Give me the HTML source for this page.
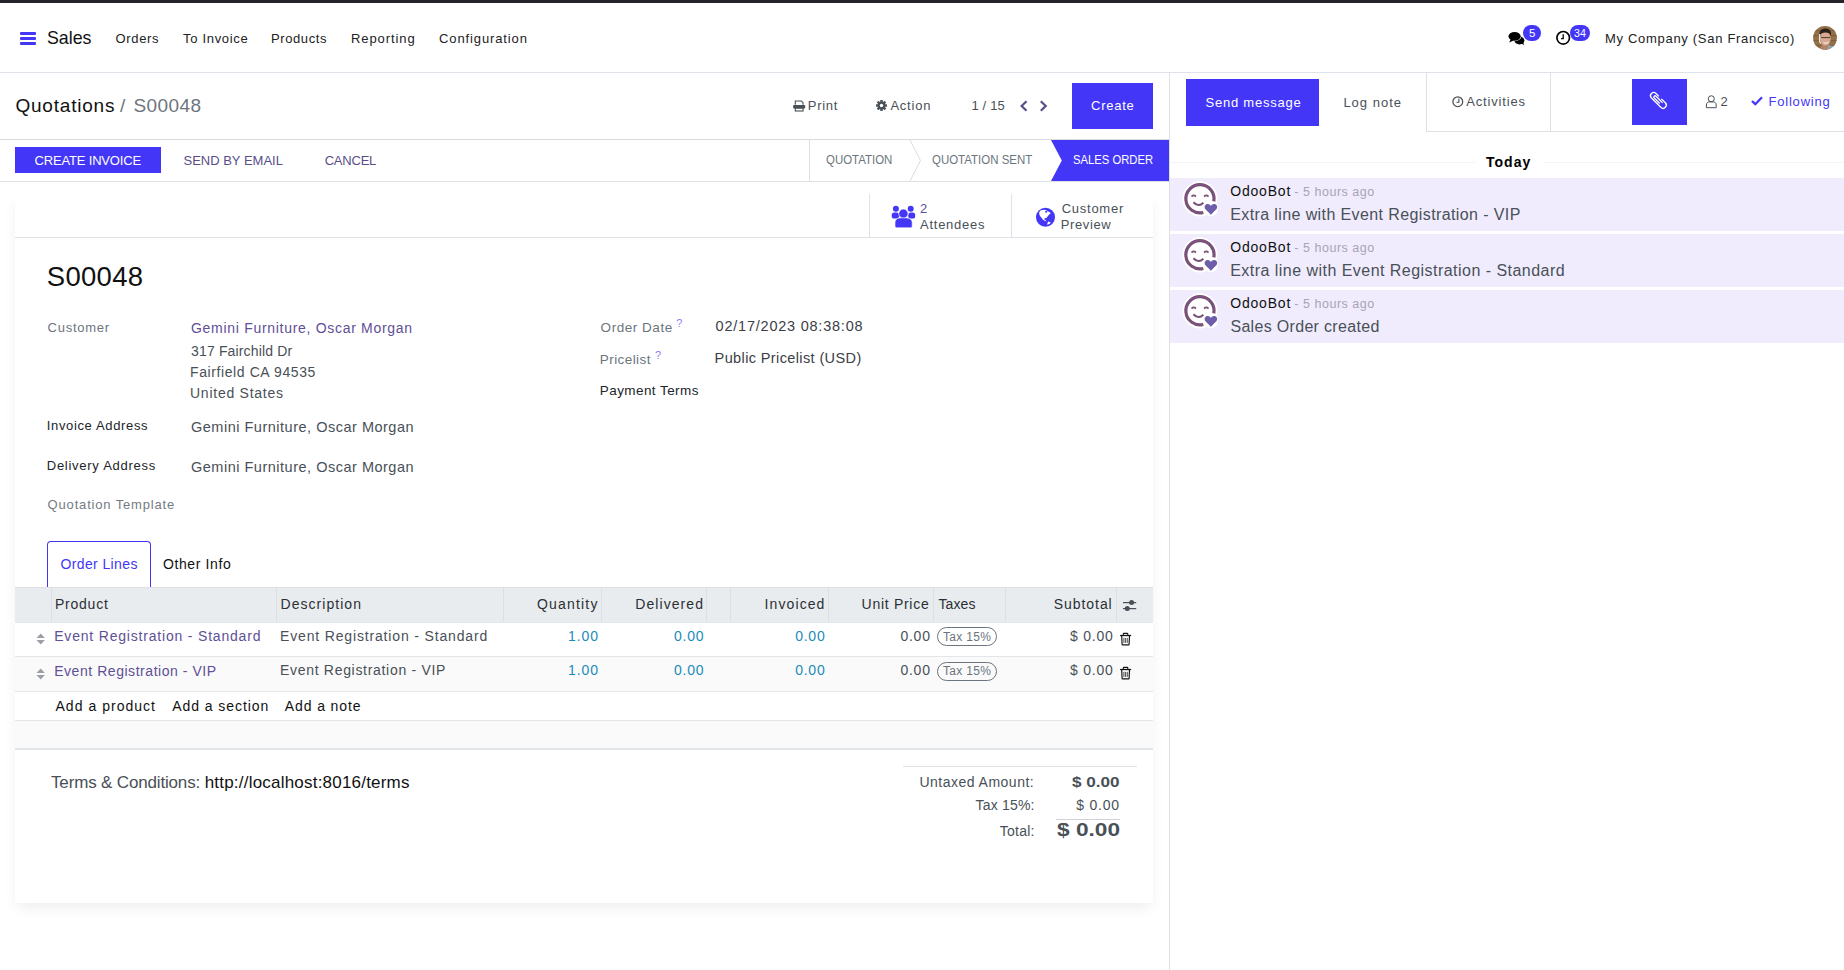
<!DOCTYPE html>
<html><head><meta charset="utf-8">
<style>
html,body{margin:0;padding:0;width:1844px;height:970px;overflow:hidden;background:#fff;font-family:"Liberation Sans",sans-serif;}
.a{position:absolute;box-sizing:border-box;}
.t{position:absolute;white-space:pre;font-family:"Liberation Sans",sans-serif;}
svg{position:absolute;overflow:visible;}
</style></head><body>
<!-- top strip -->
<div class="a" style="left:0;top:0;width:1844px;height:3px;background:#25232b"></div>
<!-- navbar border -->
<div class="a" style="left:0;top:72px;width:1844px;height:1px;background:#dde3e8"></div>
<!-- hamburger -->
<div class="a" style="left:20px;top:32px;width:16px;height:2.6px;background:#4336f7;border-radius:1px"></div>
<div class="a" style="left:20px;top:37.2px;width:16px;height:2.6px;background:#4336f7;border-radius:1px"></div>
<div class="a" style="left:20px;top:42.4px;width:16px;height:2.6px;background:#4336f7;border-radius:1px"></div>
<!-- chat icon -->
<svg style="left:1507px;top:30px" width="20" height="17" viewBox="0 0 20 17">
  <ellipse cx="12.4" cy="10.5" rx="5" ry="3.9" fill="#000"/>
  <path d="M14.2 13.4 L17 15.1 L16.2 12 Z" fill="#000"/>
  <ellipse cx="7.6" cy="6.3" rx="6.7" ry="4.9" fill="#fff"/>
  <ellipse cx="7.6" cy="6.3" rx="6.1" ry="4.4" fill="#000"/>
  <path d="M3.6 9.6 L2.1 12.6 L6.8 10.5 Z" fill="#000"/>
</svg>
<div class="a" style="left:1523px;top:25px;width:18px;height:16px;border-radius:8px;background:#4336f7"></div>
<!-- clock icon -->
<svg style="left:1555px;top:30px" width="17" height="17" viewBox="0 0 17 17">
  <circle cx="8.2" cy="7.8" r="6.3" fill="#fff" stroke="#000" stroke-width="1.7"/>
  <path d="M8.2 4.3 V8.6 H6.1" fill="none" stroke="#000" stroke-width="1.3"/>
</svg>
<div class="a" style="left:1569.5px;top:25px;width:20.5px;height:16px;border-radius:8px;background:#4336f7"></div>
<!-- avatar -->
<svg style="left:1813px;top:26px" width="24" height="24" viewBox="0 0 24 24">
  <defs><clipPath id="av"><circle cx="12" cy="11.9" r="11.9"/></clipPath></defs>
  <g clip-path="url(#av)">
    <rect width="24" height="24" fill="#94714a"/>
    <g fill="#6e5434" opacity="0.6">
      <rect x="0" y="4" width="24" height="1.2"/><rect x="0" y="9" width="24" height="1.2"/>
      <rect x="0" y="14" width="24" height="1.2"/><rect x="0" y="19" width="24" height="1.2"/>
    </g>
    <path d="M8 24 C8 19 9 17 12 17 C15 17 18 19 19 24 Z" fill="#b48467"/>
    <path d="M14 24 L15.5 19.5 L21 20 L22 24 Z" fill="#8ea3b3"/>
    <ellipse cx="12.4" cy="12.6" rx="5.3" ry="7" fill="#d8a890"/>
    <path d="M6.4 9.5 C6 3.5 10 2.5 12.5 2.6 C16 2.7 18.6 4.5 18 10 C17 7 15 6.3 12.5 6.4 C9.5 6.5 7.5 7.2 6.4 9.5 Z" fill="#2b211c"/>
    <path d="M6.6 8 V15 C6.6 16 7.4 17 8 17.5" fill="none" stroke="#e8e4e2" stroke-width="1.3"/>
    <path d="M8 11.6 H17" stroke="#3a302a" stroke-width="0.9"/>
    <path d="M10.5 16.5 Q13 18 15.5 16.2" fill="none" stroke="#f4ece8" stroke-width="1.1"/>
  </g>
</svg>

<!-- control panel -->
<div class="a" style="left:0;top:139px;width:1169px;height:1px;background:#d8dadd"></div>
<!-- print icon -->
<svg style="left:793px;top:99.5px" width="13" height="12" viewBox="0 0 13 12">
  <path d="M2.3 4.7 V1 H8.3 L10 2.7 V4.7" fill="none" stroke="#495057" stroke-width="1.1"/>
  <rect x="0.1" y="5.1" width="12.1" height="3.4" rx="0.9" fill="#495057"/>
  <rect x="2.3" y="8.2" width="7.8" height="2.8" fill="#fff" stroke="#495057" stroke-width="1.1"/>
</svg>
<!-- gear -->
<svg style="left:876px;top:99.9px" width="11" height="11" viewBox="0 0 11 11">
  <g fill="#495057" transform="translate(5.5 5.5)">
    <circle r="3.9"/>
    <rect x="-1.2" y="-5.5" width="2.4" height="11"/>
    <rect x="-1.2" y="-5.5" width="2.4" height="11" transform="rotate(45)"/>
    <rect x="-1.2" y="-5.5" width="2.4" height="11" transform="rotate(90)"/>
    <rect x="-1.2" y="-5.5" width="2.4" height="11" transform="rotate(135)"/>
  </g>
  <circle cx="5.5" cy="5.5" r="1.7" fill="#fff"/>
</svg>
<!-- chevrons -->
<svg style="left:1019px;top:99.5px" width="10" height="12" viewBox="0 0 10 12">
  <path d="M7.5 1.2 L2.6 6 L7.5 10.8" fill="none" stroke="#5a4e8a" stroke-width="2.2"/>
</svg>
<svg style="left:1039px;top:99.5px" width="10" height="12" viewBox="0 0 10 12">
  <path d="M1.8 1.2 L6.7 6 L1.8 10.8" fill="none" stroke="#5a4e8a" stroke-width="2.2"/>
</svg>
<!-- create btn -->
<div class="a" style="left:1072px;top:83px;width:81px;height:46px;background:#4336f7"></div>

<!-- status bar -->
<div class="a" style="left:0;top:181px;width:1169px;height:1px;background:#dde1e5"></div>
<div class="a" style="left:15px;top:147px;width:146px;height:26px;background:#4336f7"></div>
<div class="a" style="left:809px;top:140px;width:1px;height:41px;background:#dde1e5"></div>
<svg style="left:900px;top:140px" width="270" height="41" viewBox="0 0 270 41">
  <path d="M10 0 L20.5 20.5 L10 41" fill="none" stroke="#d9dce0" stroke-width="1"/>
  <path d="M151 0 H269 V41 H151 L161.8 20.5 Z" fill="#4336f7"/>
</svg>

<!-- chatter -->
<div class="a" style="left:1169px;top:72px;width:1px;height:898px;background:#dde1e6"></div>
<div class="a" style="left:1186px;top:79px;width:133px;height:47px;background:#4336f7"></div>
<div class="a" style="left:1426px;top:72px;width:125px;height:60px;border:1px solid #dde1e6;border-top:none"></div>
<div class="a" style="left:1550px;top:131px;width:294px;height:1px;background:#dde1e6"></div>
<!-- activity clock -->
<svg style="left:1451.5px;top:95.5px" width="12" height="12" viewBox="0 0 12 12">
  <circle cx="5.8" cy="5.7" r="4.9" fill="none" stroke="#495057" stroke-width="1.25"/>
  <path d="M6.9 2.6 V6.2 H4.5" fill="none" stroke="#495057" stroke-width="1.1"/>
</svg>
<div class="a" style="left:1632px;top:79px;width:55px;height:46px;background:#4336f7"></div>
<!-- paperclip -->
<svg style="left:1649px;top:89px" width="20" height="24" viewBox="0 0 20 24">
  <g transform="translate(9.4 11.4) rotate(-45)" fill="none" stroke="#fff" stroke-width="1.3">
    <path d="M3.2 -2.5 V-6.6 A3.2 3.2 0 0 0 -3.2 -6.6 V6.6 A3.2 3.2 0 0 0 3.2 6.6 V1"/>
    <path d="M1.3 4.6 V-4.6 A1.3 1.3 0 0 0 -1.3 -4.6 V3.2"/>
  </g>
</svg>
<!-- user icon -->
<svg style="left:1705px;top:94.5px" width="13" height="14" viewBox="0 0 13 14">
  <circle cx="6.3" cy="3.75" r="3" fill="none" stroke="#495057" stroke-width="1"/>
  <path d="M1.4 12.7 V10 C1.4 7.8 2.8 6.9 4.4 6.9 H8.2 C9.8 6.9 11.2 7.8 11.2 10 V12.7 Z" fill="none" stroke="#495057" stroke-width="1" stroke-linejoin="round"/>
</svg>
<!-- check -->
<svg style="left:1751px;top:96.4px" width="12" height="10" viewBox="0 0 12 10">
  <path d="M1 5 L4.3 8.2 L11 1.3" fill="none" stroke="#4336f7" stroke-width="2.3"/>
</svg>
<!-- Today line -->
<div class="a" style="left:1170px;top:162px;width:305px;height:1px;background:#f3f4f5"></div>
<div class="a" style="left:1543px;top:162px;width:301px;height:1px;background:#f3f4f5"></div>
<!-- messages bg -->
<div class="a" style="left:1170px;top:178px;width:674px;height:53px;background:#f0ecfd"></div>
<div class="a" style="left:1170px;top:234px;width:674px;height:53px;background:#f0ecfd"></div>
<div class="a" style="left:1170px;top:290px;width:674px;height:53px;background:#f0ecfd"></div>
<svg style="left:1182px;top:181px" width="36" height="36" viewBox="0 0 36 36">
<circle cx="17.9" cy="17.9" r="17.6" fill="#fff"/>
<path d="M21.3 31.5 A14.1 14.1 0 1 1 31.8 20.4" fill="none" stroke="#7a5178" stroke-width="3.2"/>
<path d="M9.5 15.6 Q11.7 13.2 13.9 15.6" fill="none" stroke="#7a5178" stroke-width="1.7"/>
<path d="M22.1 15.6 Q24.3 13.2 26.5 15.6" fill="none" stroke="#7a5178" stroke-width="1.7"/>
<path d="M11.4 21.2 Q16.4 26.6 21.4 21.8" fill="none" stroke="#7a5178" stroke-width="2"/>
<circle cx="29" cy="28.3" r="7" fill="#fff"/>
<path d="M28.9 33.8 L23.5 28.3 C22 26.7 22.5 23.5 25.2 23 C26.8 22.7 28.2 23.6 28.9 24.9 C29.6 23.6 31 22.7 32.6 23 C35.3 23.5 35.8 26.7 34.3 28.3 Z" fill="#6c5ea8"/>
</svg>
<svg style="left:1182px;top:237px" width="36" height="36" viewBox="0 0 36 36">
<circle cx="17.9" cy="17.9" r="17.6" fill="#fff"/>
<path d="M21.3 31.5 A14.1 14.1 0 1 1 31.8 20.4" fill="none" stroke="#7a5178" stroke-width="3.2"/>
<path d="M9.5 15.6 Q11.7 13.2 13.9 15.6" fill="none" stroke="#7a5178" stroke-width="1.7"/>
<path d="M22.1 15.6 Q24.3 13.2 26.5 15.6" fill="none" stroke="#7a5178" stroke-width="1.7"/>
<path d="M11.4 21.2 Q16.4 26.6 21.4 21.8" fill="none" stroke="#7a5178" stroke-width="2"/>
<circle cx="29" cy="28.3" r="7" fill="#fff"/>
<path d="M28.9 33.8 L23.5 28.3 C22 26.7 22.5 23.5 25.2 23 C26.8 22.7 28.2 23.6 28.9 24.9 C29.6 23.6 31 22.7 32.6 23 C35.3 23.5 35.8 26.7 34.3 28.3 Z" fill="#6c5ea8"/>
</svg>
<svg style="left:1182px;top:293px" width="36" height="36" viewBox="0 0 36 36">
<circle cx="17.9" cy="17.9" r="17.6" fill="#fff"/>
<path d="M21.3 31.5 A14.1 14.1 0 1 1 31.8 20.4" fill="none" stroke="#7a5178" stroke-width="3.2"/>
<path d="M9.5 15.6 Q11.7 13.2 13.9 15.6" fill="none" stroke="#7a5178" stroke-width="1.7"/>
<path d="M22.1 15.6 Q24.3 13.2 26.5 15.6" fill="none" stroke="#7a5178" stroke-width="1.7"/>
<path d="M11.4 21.2 Q16.4 26.6 21.4 21.8" fill="none" stroke="#7a5178" stroke-width="2"/>
<circle cx="29" cy="28.3" r="7" fill="#fff"/>
<path d="M28.9 33.8 L23.5 28.3 C22 26.7 22.5 23.5 25.2 23 C26.8 22.7 28.2 23.6 28.9 24.9 C29.6 23.6 31 22.7 32.6 23 C35.3 23.5 35.8 26.7 34.3 28.3 Z" fill="#6c5ea8"/>
</svg>

<!-- sheet -->
<div class="a" style="left:15px;top:194px;width:1138px;height:709px;background:#fff;box-shadow:0 7px 14px -2px rgba(0,0,0,0.07)"></div>
<!-- button box -->
<div class="a" style="left:869px;top:194px;width:1px;height:43px;background:#dfe2e6"></div>
<div class="a" style="left:1011px;top:194px;width:1px;height:43px;background:#dfe2e6"></div>
<div class="a" style="left:15px;top:237px;width:1138px;height:1px;background:#dfe2e6"></div>
<!-- people icon -->
<svg style="left:886px;top:200px" width="32" height="32" viewBox="0 0 32 32">
  <g fill="#4336f7">
    <circle cx="9.9" cy="8.8" r="3"/>
    <circle cx="24.7" cy="8.8" r="3"/>
    <rect x="5.7" y="12.6" width="7.3" height="5.9" rx="2.6"/>
    <rect x="22.2" y="12.6" width="7" height="5.9" rx="2.6"/>
    <circle cx="17.4" cy="13.7" r="4.6" stroke="#fff" stroke-width="0.6"/>
    <path d="M9 22.3 C9 19.5 11.5 17.9 14 17.9 H20.6 C23.2 17.9 26.2 19.5 26.2 22.3 V26 C26.2 27.2 25.4 27.8 24.4 27.8 H10.8 C9.8 27.8 9 27.2 9 26 Z" stroke="#fff" stroke-width="0.6"/>
  </g>
</svg>
<!-- globe -->
<svg style="left:1032px;top:204px" width="26" height="26" viewBox="0 0 26 26">
  <circle cx="13.5" cy="13.3" r="9.5" fill="#4336f7"/>
  <path d="M7.24 8.04 L8.85 6.17 L12.87 5.63 L15.01 6.7 L18.77 9.12 L16.09 11.8 L14.48 13.94 L12.6 14.2 L12.33 15.28 L13.94 16.62 L14.48 17.43 L11.26 16.09 L8.04 12.06 L7.24 10.19 Z" fill="#fff"/>
  <circle cx="14.2" cy="7.8" r="1.05" fill="#4336f7"/>
  <path d="M15.01 20.64 L16.09 17.43 L18.77 18.5 L17.43 20.1 Z" fill="#fff"/>
</svg>

<!-- tab -->
<div class="a" style="left:47px;top:541px;width:104px;height:47px;border:1px solid #4336f7;border-bottom:none;border-radius:4px 4px 0 0;background:#fff"></div>

<!-- table -->
<div class="a" style="left:15px;top:587px;width:1138px;height:36px;background:#e9ecef;border-top:1px solid #dde0e4;border-bottom:1px solid #e6e9ec"></div>
<div class="a" style="left:51px;top:588px;width:1px;height:34px;background:#dcdfe3"></div>
<div class="a" style="left:276px;top:588px;width:1px;height:34px;background:#dcdfe3"></div>
<div class="a" style="left:503px;top:588px;width:1px;height:34px;background:#dcdfe3"></div>
<div class="a" style="left:601px;top:588px;width:1px;height:34px;background:#dcdfe3"></div>
<div class="a" style="left:706px;top:588px;width:1px;height:34px;background:#dcdfe3"></div>
<div class="a" style="left:730px;top:588px;width:1px;height:34px;background:#dcdfe3"></div>
<div class="a" style="left:828px;top:588px;width:1px;height:34px;background:#dcdfe3"></div>
<div class="a" style="left:933px;top:588px;width:1px;height:34px;background:#dcdfe3"></div>
<div class="a" style="left:1005px;top:588px;width:1px;height:34px;background:#dcdfe3"></div>
<div class="a" style="left:1116px;top:588px;width:1px;height:34px;background:#dcdfe3"></div>
<!-- sliders -->
<svg style="left:1122px;top:600px" width="15" height="12" viewBox="0 0 15 12">
  <g fill="#495057">
    <rect x="1" y="2" width="13.2" height="1.2"/>
    <rect x="1" y="8" width="13.2" height="1.2"/>
    <circle cx="9.6" cy="2.6" r="2.5"/>
    <circle cx="5.3" cy="8.6" r="2.5"/>
  </g>
</svg>
<div class="a" style="left:15px;top:656px;width:1138px;height:1px;background:#e3e6e9"></div>
<div class="a" style="left:15px;top:657px;width:1138px;height:34px;background:#fafafa"></div>
<div class="a" style="left:15px;top:691px;width:1138px;height:1px;background:#e3e6e9"></div>
<div class="a" style="left:15px;top:692px;width:1138px;height:28px;background:#fff"></div>
<div class="a" style="left:15px;top:720px;width:1138px;height:1px;background:#e3e6e9"></div>
<div class="a" style="left:15px;top:721px;width:1138px;height:27px;background:#fafafa"></div>
<div class="a" style="left:15px;top:748px;width:1138px;height:2px;background:#e3e6ea"></div>
<svg style="left:36px;top:633px" width="10" height="12" viewBox="0 0 10 12"><path d="M0.5 5 L4.7 0.6 L8.9 5 Z M0.5 7 L4.7 11.4 L8.9 7 Z" fill="#9aa0a6"/></svg>
<div class="a" style="left:937px;top:627px;width:60px;height:18.5px;border:1px solid #6c757d;border-radius:9.5px"></div>
<svg style="left:1120px;top:633px" width="12" height="13" viewBox="0 0 12 13"><g fill="none" stroke="#111"><path d="M3.3 2.3 V1.1 Q3.3 0.4 4 0.4 H7.1 Q7.8 0.4 7.8 1.1 V2.3" stroke-width="1.1"/><path d="M1.7 3 L2.1 11.2 Q2.1 11.8 2.7 11.8 H8.5 Q9.1 11.8 9.1 11.2 L9.5 3" stroke-width="1.15"/><path d="M3.9 4.9 V9.9 M5.6 4.9 V9.9 M7.3 4.9 V9.9" stroke-width="0.75"/></g><rect x="0.1" y="1.9" width="11" height="1.25" fill="#111"/></svg>
<svg style="left:36px;top:668px" width="10" height="12" viewBox="0 0 10 12"><path d="M0.5 5 L4.7 0.6 L8.9 5 Z M0.5 7 L4.7 11.4 L8.9 7 Z" fill="#9aa0a6"/></svg>
<div class="a" style="left:937px;top:662px;width:60px;height:18.5px;border:1px solid #6c757d;border-radius:9.5px"></div>
<svg style="left:1120px;top:667px" width="12" height="13" viewBox="0 0 12 13"><g fill="none" stroke="#111"><path d="M3.3 2.3 V1.1 Q3.3 0.4 4 0.4 H7.1 Q7.8 0.4 7.8 1.1 V2.3" stroke-width="1.1"/><path d="M1.7 3 L2.1 11.2 Q2.1 11.8 2.7 11.8 H8.5 Q9.1 11.8 9.1 11.2 L9.5 3" stroke-width="1.15"/><path d="M3.9 4.9 V9.9 M5.6 4.9 V9.9 M7.3 4.9 V9.9" stroke-width="0.75"/></g><rect x="0.1" y="1.9" width="11" height="1.25" fill="#111"/></svg>

<!-- totals lines -->
<div class="a" style="left:903px;top:766px;width:234px;height:1px;background:#dfe2e6"></div>
<div class="a" style="left:1056px;top:819px;width:64px;height:1px;background:#cfd3d7"></div>

<span class="t" style="left:47.00px;top:27.85px;font-size:19px;line-height:19px;color:#111;transform:scaleX(0.9356);transform-origin:0 0">Sales</span>
<span class="t" style="left:115.50px;top:31.95px;font-size:13px;line-height:13px;color:#222;letter-spacing:0.654px">Orders</span>
<span class="t" style="left:183.00px;top:31.95px;font-size:13px;line-height:13px;color:#222;letter-spacing:0.689px">To Invoice</span>
<span class="t" style="left:271.00px;top:31.95px;font-size:13px;line-height:13px;color:#222;letter-spacing:0.600px">Products</span>
<span class="t" style="left:351.00px;top:31.95px;font-size:13px;line-height:13px;color:#222;letter-spacing:0.920px">Reporting</span>
<span class="t" style="left:439.00px;top:31.95px;font-size:13px;line-height:13px;color:#222;letter-spacing:0.884px">Configuration</span>
<span class="t" style="left:1605.00px;top:31.95px;font-size:13px;line-height:13px;color:#222;letter-spacing:0.696px">My Company (San Francisco)</span>
<span class="t" style="left:1529.00px;top:27.52px;font-size:11.5px;line-height:11.5px;color:#fff">5</span>
<span class="t" style="left:1573.80px;top:27.52px;font-size:11.5px;line-height:11.5px;color:#fff;transform:scaleX(0.9257);transform-origin:0 0">34</span>
<span class="t" style="left:15.40px;top:95.85px;font-size:19px;line-height:19px;color:#111;letter-spacing:0.801px">Quotations</span>
<span class="t" style="left:120.00px;top:95.85px;font-size:19px;line-height:19px;color:#6c757d">/</span>
<span class="t" style="left:133.50px;top:95.85px;font-size:19px;line-height:19px;color:#6c757d;letter-spacing:0.412px">S00048</span>
<span class="t" style="left:807.80px;top:99.15px;font-size:13px;line-height:13px;color:#495057;letter-spacing:0.720px">Print</span>
<span class="t" style="left:890.40px;top:99.15px;font-size:13px;line-height:13px;color:#495057;letter-spacing:0.780px">Action</span>
<span class="t" style="left:971.40px;top:99.15px;font-size:13px;line-height:13px;color:#495057;letter-spacing:0.181px">1 / 15</span>
<span class="t" style="left:1091.00px;top:99.15px;font-size:13px;line-height:13px;color:#fff;letter-spacing:0.762px">Create</span>
<span class="t" style="left:34.60px;top:153.95px;font-size:13px;line-height:13px;color:#fff;letter-spacing:-0.182px">CREATE INVOICE</span>
<span class="t" style="left:183.50px;top:153.95px;font-size:13px;line-height:13px;color:#5a4e8a;letter-spacing:-0.006px">SEND BY EMAIL</span>
<span class="t" style="left:324.70px;top:153.95px;font-size:13px;line-height:13px;color:#5a4e8a;letter-spacing:-0.221px">CANCEL</span>
<span class="t" style="left:825.50px;top:153.15px;font-size:13px;line-height:13px;color:#6c757d;transform:scaleX(0.8805);transform-origin:0 0">QUOTATION</span>
<span class="t" style="left:932.30px;top:153.15px;font-size:13px;line-height:13px;color:#6c757d;transform:scaleX(0.8822);transform-origin:0 0">QUOTATION SENT</span>
<span class="t" style="left:1073.00px;top:153.15px;font-size:13px;line-height:13px;color:#fff;transform:scaleX(0.8655);transform-origin:0 0">SALES ORDER</span>
<span class="t" style="left:920.00px;top:201.85px;font-size:13px;line-height:13px;color:#5e4f96">2</span>
<span class="t" style="left:920.00px;top:217.65px;font-size:13px;line-height:13px;color:#495057;letter-spacing:0.744px">Attendees</span>
<span class="t" style="left:1061.70px;top:201.85px;font-size:13px;line-height:13px;color:#495057;letter-spacing:0.740px">Customer</span>
<span class="t" style="left:1060.70px;top:217.65px;font-size:13px;line-height:13px;color:#495057;letter-spacing:0.625px">Preview</span>
<span class="t" style="left:46.80px;top:263.43px;font-size:27.5px;line-height:27.5px;color:#111;letter-spacing:0.296px">S00048</span>
<span class="t" style="left:47.60px;top:321.05px;font-size:13px;line-height:13px;color:#6c757d;letter-spacing:0.740px">Customer</span>
<span class="t" style="left:191.00px;top:321.10px;font-size:14px;line-height:14px;color:#5e4f96;letter-spacing:0.702px">Gemini Furniture, Oscar Morgan</span>
<span class="t" style="left:191.00px;top:344.10px;font-size:14px;line-height:14px;color:#495057;letter-spacing:0.157px">317 Fairchild Dr</span>
<span class="t" style="left:190.00px;top:365.10px;font-size:14px;line-height:14px;color:#495057;letter-spacing:0.596px">Fairfield CA 94535</span>
<span class="t" style="left:190.00px;top:386.10px;font-size:14px;line-height:14px;color:#495057;letter-spacing:0.746px">United States</span>
<span class="t" style="left:46.80px;top:418.95px;font-size:13px;line-height:13px;color:#212529;letter-spacing:0.643px">Invoice Address</span>
<span class="t" style="left:191.00px;top:419.78px;font-size:14.5px;line-height:14.5px;color:#495057;letter-spacing:0.506px">Gemini Furniture, Oscar Morgan</span>
<span class="t" style="left:46.80px;top:458.95px;font-size:13px;line-height:13px;color:#212529;letter-spacing:0.723px">Delivery Address</span>
<span class="t" style="left:191.00px;top:459.98px;font-size:14.5px;line-height:14.5px;color:#495057;letter-spacing:0.506px">Gemini Furniture, Oscar Morgan</span>
<span class="t" style="left:47.60px;top:497.75px;font-size:13px;line-height:13px;color:#757b82;letter-spacing:0.829px">Quotation Template</span>
<span class="t" style="left:600.60px;top:320.52px;font-size:13.5px;line-height:13.5px;color:#6c757d;letter-spacing:0.537px">Order Date</span>
<span class="t" style="left:676.20px;top:317.75px;font-size:11px;line-height:11px;color:#8b7ff0">?</span>
<span class="t" style="left:715.60px;top:319.28px;font-size:14.5px;line-height:14.5px;color:#3b4046;letter-spacing:0.773px">02/17/2023 08:38:08</span>
<span class="t" style="left:599.80px;top:352.52px;font-size:13.5px;line-height:13.5px;color:#6c757d;letter-spacing:0.424px">Pricelist</span>
<span class="t" style="left:655.00px;top:349.85px;font-size:11px;line-height:11px;color:#8b7ff0">?</span>
<span class="t" style="left:714.60px;top:351.38px;font-size:14.5px;line-height:14.5px;color:#3b4046;letter-spacing:0.383px">Public Pricelist (USD)</span>
<span class="t" style="left:599.80px;top:384.02px;font-size:13.5px;line-height:13.5px;color:#212529;letter-spacing:0.423px">Payment Terms</span>
<span class="t" style="left:60.40px;top:556.90px;font-size:14px;line-height:14px;color:#4336f7;letter-spacing:0.386px">Order Lines</span>
<span class="t" style="left:162.90px;top:556.90px;font-size:14px;line-height:14px;color:#111;letter-spacing:0.615px">Other Info</span>
<span class="t" style="left:54.90px;top:597.10px;font-size:14px;line-height:14px;color:#2b3035;letter-spacing:0.790px">Product</span>
<span class="t" style="left:280.50px;top:597.10px;font-size:14px;line-height:14px;color:#2b3035;letter-spacing:1.046px">Description</span>
<span class="t" style="left:537.00px;top:597.10px;font-size:14px;line-height:14px;color:#2b3035;letter-spacing:1.180px">Quantity</span>
<span class="t" style="left:635.20px;top:597.10px;font-size:14px;line-height:14px;color:#2b3035;letter-spacing:1.081px">Delivered</span>
<span class="t" style="left:764.60px;top:597.10px;font-size:14px;line-height:14px;color:#2b3035;letter-spacing:1.092px">Invoiced</span>
<span class="t" style="left:861.60px;top:597.10px;font-size:14px;line-height:14px;color:#2b3035;letter-spacing:0.712px">Unit Price</span>
<span class="t" style="left:938.40px;top:597.10px;font-size:14px;line-height:14px;color:#2b3035;letter-spacing:0.107px">Taxes</span>
<span class="t" style="left:1053.80px;top:597.10px;font-size:14px;line-height:14px;color:#2b3035;letter-spacing:0.934px">Subtotal</span>
<span class="t" style="left:54.20px;top:629.10px;font-size:14px;line-height:14px;color:#5e4f96;letter-spacing:0.808px">Event Registration - Standard</span>
<span class="t" style="left:280.00px;top:629.10px;font-size:14px;line-height:14px;color:#495057;letter-spacing:0.840px">Event Registration - Standard</span>
<span class="t" style="left:567.90px;top:629.10px;font-size:14px;line-height:14px;color:#1a8cb8;letter-spacing:0.979px">1.00</span>
<span class="t" style="left:674.00px;top:629.10px;font-size:14px;line-height:14px;color:#1a8cb8;letter-spacing:0.746px">0.00</span>
<span class="t" style="left:795.20px;top:629.10px;font-size:14px;line-height:14px;color:#1a8cb8;letter-spacing:0.746px">0.00</span>
<span class="t" style="left:900.40px;top:629.10px;font-size:14px;line-height:14px;color:#495057;letter-spacing:0.779px">0.00</span>
<span class="t" style="left:942.90px;top:631.10px;font-size:12px;line-height:12px;color:#6c757d;letter-spacing:0.341px">Tax 15%</span>
<span class="t" style="left:1070.00px;top:629.10px;font-size:14px;line-height:14px;color:#495057;letter-spacing:0.772px">$ 0.00</span>
<span class="t" style="left:54.20px;top:664.10px;font-size:14px;line-height:14px;color:#5e4f96;letter-spacing:0.545px">Event Registration - VIP</span>
<span class="t" style="left:280.00px;top:663.00px;font-size:14px;line-height:14px;color:#495057;letter-spacing:0.693px">Event Registration - VIP</span>
<span class="t" style="left:567.90px;top:663.00px;font-size:14px;line-height:14px;color:#1a8cb8;letter-spacing:0.979px">1.00</span>
<span class="t" style="left:674.00px;top:663.00px;font-size:14px;line-height:14px;color:#1a8cb8;letter-spacing:0.746px">0.00</span>
<span class="t" style="left:795.20px;top:663.00px;font-size:14px;line-height:14px;color:#1a8cb8;letter-spacing:0.746px">0.00</span>
<span class="t" style="left:900.40px;top:663.00px;font-size:14px;line-height:14px;color:#495057;letter-spacing:0.779px">0.00</span>
<span class="t" style="left:942.90px;top:665.00px;font-size:12px;line-height:12px;color:#6c757d;letter-spacing:0.341px">Tax 15%</span>
<span class="t" style="left:1070.00px;top:663.00px;font-size:14px;line-height:14px;color:#495057;letter-spacing:0.772px">$ 0.00</span>
<span class="t" style="left:55.50px;top:699.10px;font-size:14px;line-height:14px;color:#111;letter-spacing:1.026px">Add a product</span>
<span class="t" style="left:172.20px;top:699.10px;font-size:14px;line-height:14px;color:#111;letter-spacing:0.938px">Add a section</span>
<span class="t" style="left:284.80px;top:699.10px;font-size:14px;line-height:14px;color:#111;letter-spacing:0.885px">Add a note</span>
<span class="t" style="left:51.00px;top:773.85px;font-size:17px;line-height:17px;color:#495057;letter-spacing:-0.160px">Terms &amp; Conditions:</span>
<span class="t" style="left:204.70px;top:773.85px;font-size:17px;line-height:17px;color:#111;letter-spacing:0.208px">http://localhost:8016/terms</span>
<span class="t" style="left:919.40px;top:775.10px;font-size:14px;line-height:14px;color:#495057;letter-spacing:0.494px">Untaxed Amount:</span>
<span class="t" style="left:1071.50px;top:775.10px;font-size:14px;line-height:14px;color:#495057;font-weight:700;transform:scaleX(1.2213);transform-origin:0 0">$ 0.00</span>
<span class="t" style="left:975.50px;top:798.20px;font-size:14px;line-height:14px;color:#495057;letter-spacing:0.201px">Tax 15%:</span>
<span class="t" style="left:1076.30px;top:798.20px;font-size:14px;line-height:14px;color:#495057;letter-spacing:0.772px">$ 0.00</span>
<span class="t" style="left:999.70px;top:824.20px;font-size:14px;line-height:14px;color:#495057;letter-spacing:0.266px">Total:</span>
<span class="t" style="left:1056.60px;top:820.77px;font-size:18.5px;line-height:18.5px;color:#495057;font-weight:700;transform:scaleX(1.2259);transform-origin:0 0">$ 0.00</span>
<span class="t" style="left:1205.50px;top:96.05px;font-size:13px;line-height:13px;color:#fff;letter-spacing:0.773px">Send message</span>
<span class="t" style="left:1343.40px;top:96.05px;font-size:13px;line-height:13px;color:#495057;letter-spacing:1.004px">Log note</span>
<span class="t" style="left:1466.30px;top:95.15px;font-size:13px;line-height:13px;color:#495057;letter-spacing:0.823px">Activities</span>
<span class="t" style="left:1720.50px;top:95.15px;font-size:13px;line-height:13px;color:#495057">2</span>
<span class="t" style="left:1768.50px;top:95.15px;font-size:13px;line-height:13px;color:#4336f7;letter-spacing:0.790px">Following</span>
<span class="t" style="left:1486.00px;top:155.20px;font-size:14px;line-height:14px;color:#000;font-weight:700;letter-spacing:1.024px">Today</span>
<span class="t" style="left:1230.30px;top:184.10px;font-size:14px;line-height:14px;color:#111;letter-spacing:0.788px">OdooBot</span>
<span class="t" style="left:1294.30px;top:186.38px;font-size:12.5px;line-height:12.5px;color:#a9a4b4;letter-spacing:0.525px">- 5 hours ago</span>
<span class="t" style="left:1230.20px;top:207.20px;font-size:16px;line-height:16px;color:#495057;letter-spacing:0.395px">Extra line with Event Registration - VIP</span>
<span class="t" style="left:1230.30px;top:240.10px;font-size:14px;line-height:14px;color:#111;letter-spacing:0.788px">OdooBot</span>
<span class="t" style="left:1294.30px;top:242.38px;font-size:12.5px;line-height:12.5px;color:#a9a4b4;letter-spacing:0.525px">- 5 hours ago</span>
<span class="t" style="left:1230.20px;top:263.20px;font-size:16px;line-height:16px;color:#495057;letter-spacing:0.465px">Extra line with Event Registration - Standard</span>
<span class="t" style="left:1230.30px;top:296.10px;font-size:14px;line-height:14px;color:#111;letter-spacing:0.788px">OdooBot</span>
<span class="t" style="left:1294.30px;top:298.38px;font-size:12.5px;line-height:12.5px;color:#a9a4b4;letter-spacing:0.525px">- 5 hours ago</span>
<span class="t" style="left:1230.40px;top:319.20px;font-size:16px;line-height:16px;color:#495057;letter-spacing:0.318px">Sales Order created</span>
</body></html>
